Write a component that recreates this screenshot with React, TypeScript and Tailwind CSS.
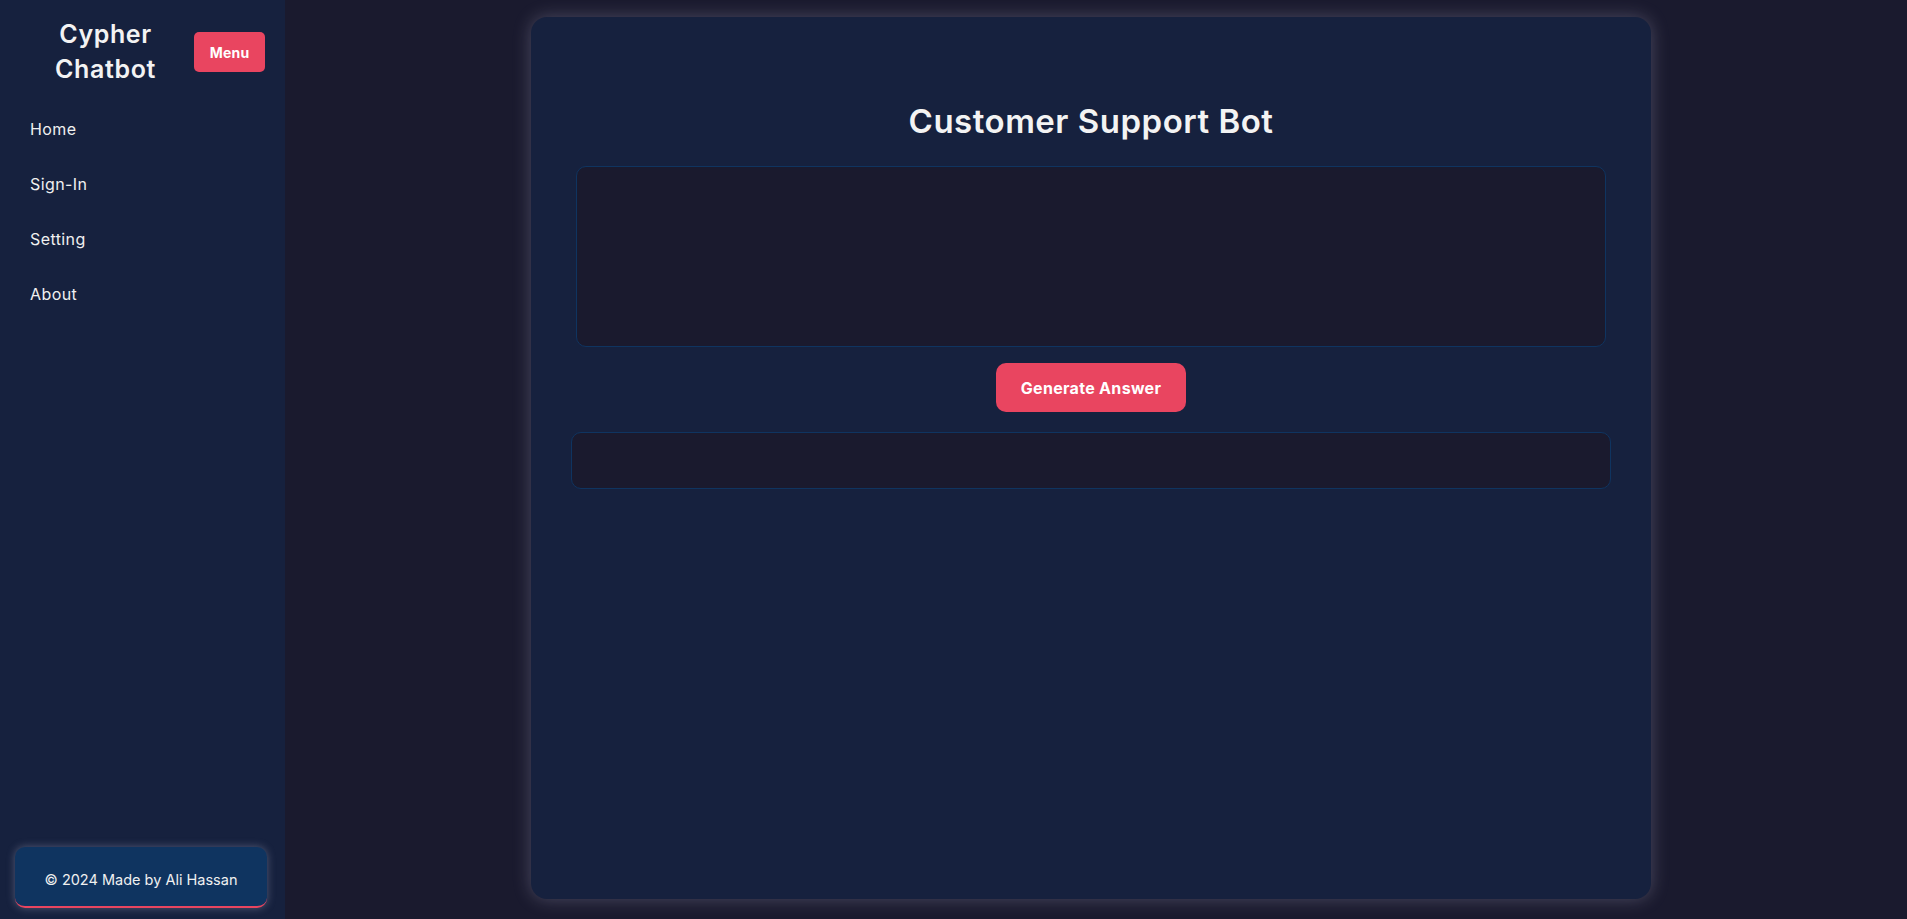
import React from "react"

const font = { fontFamily: "Inter, 'Noto Sans', sans-serif" }

function Sidebar() {
  const links = ["Home", "Sign-In", "Setting", "About"]
  return (
    <aside className="w-[285px] shrink-0 h-full bg-[#16213e] flex flex-col">
      <div className="flex items-center justify-between pl-5 pr-5 pt-[17px] pb-[14px]">
        <h2 className="flex-1 pr-[3px] text-center text-[25px] leading-[35px] font-semibold text-[#f3f3f3] tracking-[0.6px]">
          Cypher
          <br />
          Chatbot
        </h2>
        <button className="w-[71px] h-[40px] rounded-[5px] bg-[#e94560] text-white text-[14px] font-bold tracking-[0.2px]">
          Menu
        </button>
      </div>

      <nav className="flex flex-col">
        {links.map((l) => (
          <a
            key={l}
            href="#"
            className="h-[55px] flex items-center px-[30px] text-[16px] leading-[24px] text-[#f0f0f0] tracking-[0.4px]"
          >
            {l}
          </a>
        ))}
      </nav>

      <div className="mt-auto mb-[11px] ml-[15px] w-[252px] h-[61px] rounded-[10px] bg-[#0f3460] border-b-2 border-[#e94560] shadow-[0_0_8px_rgba(200,200,225,0.35)] flex items-center justify-center pt-[6px]">
        <span className="text-[14.5px] text-[#f0f0f0]">© 2024 Made by Ali Hassan</span>
      </div>
    </aside>
  )
}

export default function App() {
  return (
    <div className="flex h-screen w-full bg-[#1a1a2e] overflow-hidden" style={font}>
      <Sidebar />

      <main className="flex-1 h-full">
        <div className="mt-[17px] ml-[246px] w-[1120px] h-[882px] rounded-[16px] bg-[#16213e] shadow-[0_0_18px_rgba(190,185,215,0.3)] flex flex-col items-center pt-[84px]">
          <h1 className="text-[33px] leading-[40px] font-semibold text-[#f3f3f3] tracking-[0.5px] mb-[25px]">
            Customer Support Bot
          </h1>

          <textarea className="w-[1030px] h-[181px] shrink-0 resize-none rounded-[10px] border border-[#0f3460] bg-[#1a1a2e] text-white p-3 outline-none" />

          <button className="mt-[16px] w-[190px] h-[49px] rounded-[10px] bg-[#e94560] text-white text-[16px] font-bold tracking-[0.3px]">
            Generate Answer
          </button>

          <div className="mt-[20px] w-[1040px] h-[57px] rounded-[10px] border border-[#0f3460] bg-[#1a1a2e]" />
        </div>
      </main>
    </div>
  )
}
